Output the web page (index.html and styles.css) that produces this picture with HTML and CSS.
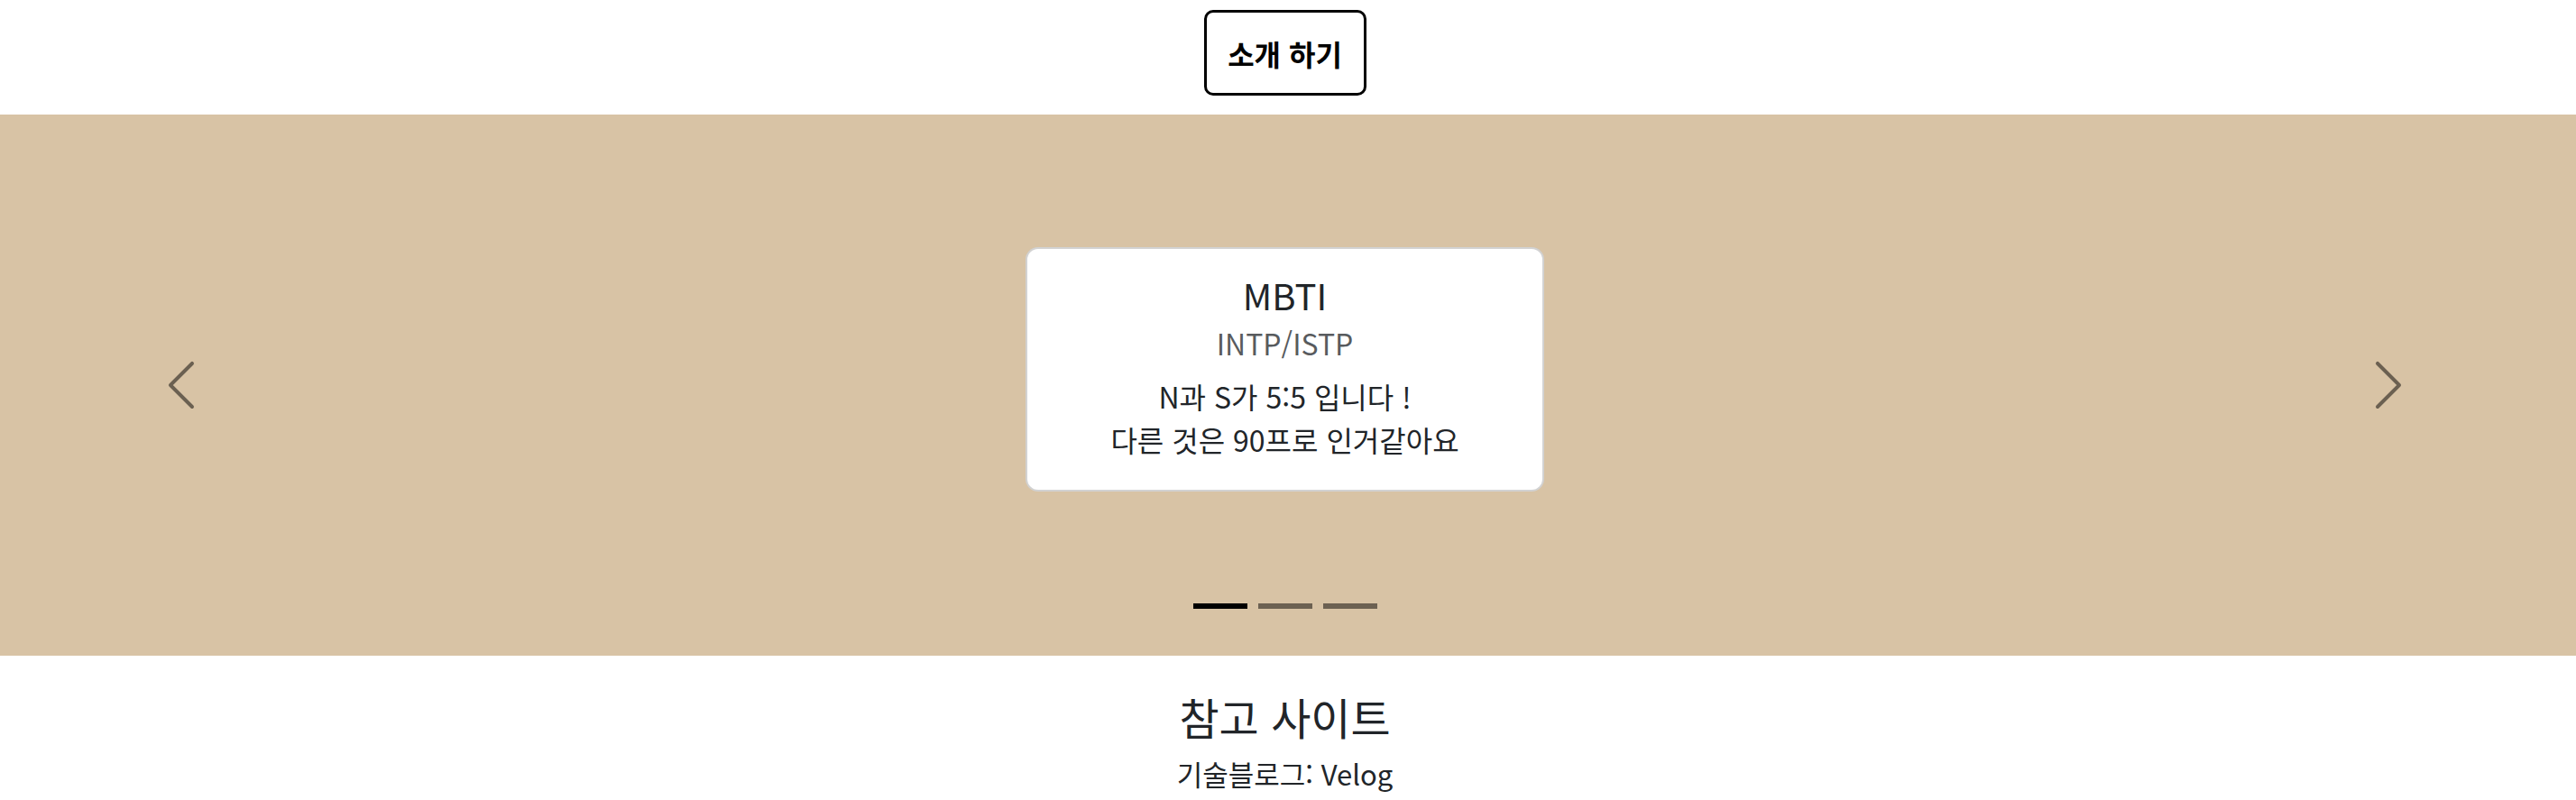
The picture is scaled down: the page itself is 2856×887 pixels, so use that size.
FILE: index.html
```html
<!DOCTYPE html>
<html lang="ko">
<head>
<meta charset="utf-8">
<title>소개</title>
<link rel="stylesheet" href="styles.css">
</head>
<body>
  <header class="top">
    <button class="intro-btn" type="button">소개 하기</button>
  </header>

  <section class="band">
    <button class="ctrl" type="button" aria-label="이전">
      <svg viewBox="0 0 16 16" width="64" height="64"><path d="M11.354 1.646a.5.5 0 0 1 0 .708L5.707 8l5.647 5.646a.5.5 0 0 1-.708.708l-6-6a.5.5 0 0 1 0-.708l6-6a.5.5 0 0 1 .708 0z"/></svg>
    </button>

    <div class="center">
      <div class="card">
        <h5 class="card-title">MBTI</h5>
        <h6 class="card-subtitle">INTP/ISTP</h6>
        <p class="card-text">N과 S가 5:5 입니다 !<br>다른 것은 90프로 인거같아요</p>
      </div>
      <div class="indicators">
        <span class="ind active"></span>
        <span class="ind"></span>
        <span class="ind"></span>
      </div>
    </div>

    <button class="ctrl" type="button" aria-label="다음">
      <svg viewBox="0 0 16 16" width="64" height="64"><path d="M4.646 1.646a.5.5 0 0 1 .708 0l6 6a.5.5 0 0 1 0 .708l-6 6a.5.5 0 0 1-.708-.708L10.293 8 4.646 2.354a.5.5 0 0 1 0-.708z"/></svg>
    </button>
  </section>

  <section class="refs">
    <h4 class="refs-title">참고 사이트</h4>
    <p class="refs-item">기술블로그: Velog</p>
  </section>
</body>
</html>
```

FILE: styles.css
```css
html, body {
  margin: 0;
  padding: 0;
}

body {
  font-family: "Noto Sans CJK KR", "Noto Sans", sans-serif;
  color: #212529;
  background: #fff;
  overflow: hidden;
}

.top {
  display: flex;
  justify-content: center;
  padding: 11px 7px 21px 0;
}

.intro-btn {
  width: 180px;
  height: 95px;
  box-sizing: border-box;
  border: 3px solid #000;
  border-radius: 10px;
  background: #fff;
  color: #000;
  font-family: "Noto Sans CJK KR", sans-serif;
  font-weight: 700;
  font-size: 32px;
  padding: 0;
  display: flex;
  align-items: center;
  justify-content: center;
}

.band {
  background: #d8c3a5;
  height: 600px;
  display: grid;
  grid-template-columns: 402px 1fr 402px;
  padding-right: 7px;
}

.ctrl {
  border: 0;
  background: transparent;
  padding: 0;
  display: flex;
  align-items: center;
  justify-content: center;
}

.ctrl svg {
  fill: #000;
  opacity: 0.5;
  display: block;
}

.center {
  display: flex;
  flex-direction: column;
  align-items: center;
  padding-top: 147px;
}

.card {
  width: 575px;
  box-sizing: border-box;
  background: #fff;
  border: 2px solid rgba(0, 0, 0, 0.175);
  border-radius: 14px;
  padding: 27px 32px 32px;
  text-align: center;
}

.card-title {
  margin: 0 0 10px;
  font-size: 40px;
  font-weight: 400;
  line-height: 48px;
}

.card-subtitle {
  margin: 0 0 16px;
  font-size: 32px;
  font-weight: 400;
  line-height: 38px;
  color: rgba(33, 37, 41, 0.75);
}

.card-text {
  margin: 0;
  font-size: 32px;
  line-height: 48px;
}

.indicators {
  margin-top: auto;
  padding-bottom: 52px;
  display: flex;
  gap: 12px;
}

.ind {
  width: 60px;
  height: 6px;
  background: #000;
  opacity: 0.5;
}

.ind.active {
  opacity: 1;
}

.refs {
  text-align: center;
  padding: 38px 7px 0 0;
}

.refs-title {
  margin: 0 0 11px;
  font-size: 48px;
  font-weight: 400;
  line-height: 58px;
}

.refs-item {
  margin: 0;
  font-size: 31px;
  line-height: 48px;
}
```
